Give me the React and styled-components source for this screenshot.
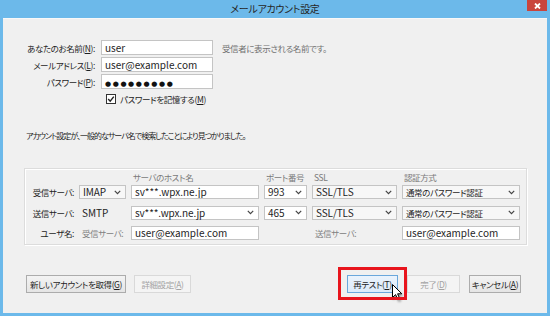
import React from 'react';
import styled, { createGlobalStyle } from 'styled-components';

const GlobalStyle = createGlobalStyle`
  html, body { margin: 0; padding: 0; }
  body {
    width: 550px;
    height: 316px;
    overflow: hidden;
    font-family: "Noto Sans CJK JP", "Noto Sans", sans-serif;
    font-feature-settings: "palt" 1;
    font-size: 8.5px;
    letter-spacing: -0.4px;
    color: #1e1e1e;
  }
`;

const COLUMNS = '46px 47px 128px 43px 85px 118px';

const Window = styled.div`
  width: 550px;
  height: 316px;
  box-sizing: border-box;
  padding: 0 3px 3px;
  background: #6cb9ea;
  display: flex;
  flex-direction: column;
`;

const TitleBar = styled.div`
  height: 18px;
  display: grid;
  grid-template-columns: 1fr auto 1fr;
  align-items: start;
`;

const Title = styled.div`
  grid-column: 2;
  font-size: 10px;
  line-height: 17px;
  color: #262626;
  letter-spacing: -0.3px;
`;

const CloseButton = styled.div`
  justify-self: end;
  width: 20px;
  height: 11px;
  background: #c9453d;
  display: flex;
  align-items: center;
  justify-content: center;
`;

const Content = styled.div`
  flex: 1;
  background: #f0f0f0;
  border-top: 1px solid #f8f8f8;
  padding-top: 21px;
  display: flex;
  flex-direction: column;
`;

const IdentityGrid = styled.div`
  display: grid;
  grid-template-columns: 92px 112px auto;
  grid-auto-rows: 15px;
  column-gap: 6px;
  row-gap: 2px;
  align-items: center;
`;

const Label = styled.div`
  text-align: right;
  white-space: nowrap;
  line-height: 12px;
`;

const Hint = styled.div`
  margin-left: 3px;
  color: #707070;
  white-space: nowrap;
`;

const Jp = styled.span`
  font-size: 8.5px;
  letter-spacing: -0.4px;
`;

const TextBox = styled.div`
  height: ${p => p.$h || 15}px;
  box-sizing: border-box;
  background: #fff;
  border: 1px solid #c4c4c4;
  padding-left: 3px;
  font-size: 10px;
  letter-spacing: 0;
  line-height: ${p => (p.$h || 15) - 2}px;
  white-space: nowrap;
  overflow: hidden;
`;

const Dots = styled.span`
  font-family: "DejaVu Sans", sans-serif;
  font-size: 7px;
  letter-spacing: 1.6px;
  color: #111;
`;

const Select = styled.div`
  height: 14px;
  box-sizing: border-box;
  background: ${p => (p.$flat ? '#fff' : '#f7f7f7')};
  border: 1px solid #c4c4c4;
  padding: 0 4px 0 3px;
  display: flex;
  align-items: center;
  justify-content: space-between;
  font-size: 10px;
  letter-spacing: -0.1px;
  line-height: 12px;
  white-space: nowrap;
`;

const CheckRow = styled.div`
  grid-column: 2 / 4;
  height: 14px;
  margin-left: 5px;
  display: flex;
  align-items: center;
  gap: 4px;
`;

const Message = styled.div`
  margin: 24px 0 0 23px;
  font-size: 8px;
  line-height: 12px;
  letter-spacing: -1px;
`;

const Group = styled.div`
  margin: 26px 20px 0 21px;
  border: 1px solid #dcdcdc;
  box-shadow: inset 1px 1px #fff, 1px 1px #fff;
  padding: 0 0 4px 3px;
`;

const HeaderRow = styled.div`
  margin-top: 2px;
  height: 12px;
  display: grid;
  grid-template-columns: ${COLUMNS};
  column-gap: 5px;
  color: #7a7a7a;
  line-height: 12px;
`;

const HeaderCell = styled.div`
  grid-column: ${p => p.$col};
  padding-left: 2px;
  white-space: nowrap;
`;

const FieldGrid = styled.div`
  margin-top: 2px;
  display: grid;
  grid-template-columns: ${COLUMNS};
  grid-auto-rows: 14px;
  column-gap: 5px;
  row-gap: 6.5px;
  align-items: center;
`;

const PlainValue = styled.div`
  padding-left: 3px;
  font-size: ${p => (p.$latin ? 10 : 8.5)}px;
  letter-spacing: ${p => (p.$latin ? 0 : -0.4)}px;
  color: ${p => (p.$muted ? '#808080' : '#1e1e1e')};
  white-space: nowrap;
`;

const ButtonRow = styled.div`
  margin-top: 30px;
  padding: 0 26px 0 23px;
  display: flex;
  align-items: center;
`;

const ButtonGroup = styled.div`
  display: flex;
  gap: ${p => p.$gap}px;
`;

const Spacer = styled.div`
  flex: 1;
`;

const Button = styled.div`
  width: ${p => p.$w}px;
  height: 18px;
  box-sizing: border-box;
  display: flex;
  align-items: center;
  justify-content: center;
  border: 1px solid ${p => (p.$disabled ? '#d9d9d9' : p.$hover ? '#6aa7dc' : '#acacac')};
  background: ${p => (p.$disabled ? '#f4f4f4' : p.$hover ? 'linear-gradient(#eaf3fc, #dcebfa)' : 'linear-gradient(#f3f3f3, #e5e5e5)')};
  color: ${p => (p.$disabled ? '#a3a3a3' : '#1e1e1e')};
  white-space: nowrap;
`;

const Highlight = styled.div`
  position: relative;
  &::after {
    content: '';
    position: absolute;
    left: -9px;
    right: -9px;
    top: -8px;
    bottom: -7px;
    border: 3px solid #e8141c;
    pointer-events: none;
  }
`;

const Pointer = styled.svg`
  position: absolute;
  left: 45px;
  top: 9px;
  filter: drop-shadow(1px 2px 1px rgba(0, 0, 0, 0.35));
`;

function Chevron() {
  return (
    <svg width="7" height="5" viewBox="0 0 7 5">
      <path d="M0.8 0.8 L3.5 3.6 L6.2 0.8" fill="none" stroke="#444" strokeWidth="1.2" />
    </svg>
  );
}

function Check() {
  return (
    <svg width="10" height="10" viewBox="0 0 10 10">
      <rect x="0.5" y="0.5" width="9" height="9" fill="#fff" stroke="#333" />
      <path d="M2.2 5 L4.2 7.2 L7.8 2.6" fill="none" stroke="#222" strokeWidth="1.4" />
    </svg>
  );
}

export default function App() {
  return (
    <>
      <GlobalStyle />
      <Window>
        <TitleBar>
          <Title>メールアカウント設定</Title>
          <CloseButton>
            <svg width="7" height="6" viewBox="0 0 7 6">
              <path d="M1 0.5 L6 5.5 M6 0.5 L1 5.5" stroke="#fff" strokeWidth="1.8" />
            </svg>
          </CloseButton>
        </TitleBar>

        <Content>
          <IdentityGrid>
            <Label>あなたのお名前(<u>N</u>):</Label>
            <TextBox>user</TextBox>
            <Hint>受信者に表示される名前です。</Hint>

            <Label>メールアドレス(<u>L</u>):</Label>
            <TextBox>user@example.com</TextBox>
            <div />

            <Label>パスワード(<u>P</u>):</Label>
            <TextBox><Dots>●●●●●●●●●</Dots></TextBox>
            <div />

            <div />
            <CheckRow>
              <Check />
              <span>パスワードを記憶する(<u>M</u>)</span>
            </CheckRow>
          </IdentityGrid>

          <Message>アカウント設定が、一般的なサーバ名で検索したことにより見つかりました。</Message>

          <Group>
            <HeaderRow>
              <HeaderCell $col={3}>サーバのホスト名</HeaderCell>
              <HeaderCell $col={4}>ポート番号</HeaderCell>
              <HeaderCell $col={5}>SSL</HeaderCell>
              <HeaderCell $col={6}>認証方式</HeaderCell>
            </HeaderRow>

            <FieldGrid>
              <Label>受信サーバ:</Label>
              <Select>IMAP<Chevron /></Select>
              <TextBox $h={14}>sv***.wpx.ne.jp</TextBox>
              <Select $flat>993<Chevron /></Select>
              <Select>SSL/TLS<Chevron /></Select>
              <Select><Jp>通常のパスワード認証</Jp><Chevron /></Select>

              <Label>送信サーバ:</Label>
              <PlainValue $latin>SMTP</PlainValue>
              <Select $flat>sv***.wpx.ne.jp<Chevron /></Select>
              <Select $flat>465<Chevron /></Select>
              <Select>SSL/TLS<Chevron /></Select>
              <Select><Jp>通常のパスワード認証</Jp><Chevron /></Select>

              <Label>ユーザ名:</Label>
              <PlainValue $muted>受信サーバ:</PlainValue>
              <TextBox $h={14}>user@example.com</TextBox>
              <div />
              <PlainValue $muted>送信サーバ:</PlainValue>
              <TextBox $h={14}>user@example.com</TextBox>
            </FieldGrid>
          </Group>

          <ButtonRow>
            <ButtonGroup $gap={8}>
              <Button $w={100}>新しいアカウントを取得(<u>G</u>)</Button>
              <Button $w={57} $disabled>詳細設定(<u>A</u>)</Button>
            </ButtonGroup>
            <Spacer />
            <ButtonGroup $gap={9}>
              <Highlight>
                <Button $w={51} $hover>再テスト(<u>T</u>)</Button>
                <Pointer width="12" height="18" viewBox="0 0 12 18">
                  <path d="M0.5 0.5 L0.5 13.5 L3.6 10.6 L5.8 15.6 L7.8 14.8 L5.6 9.8 L9.8 9.8 Z" fill="#fff" stroke="#000" strokeWidth="1" strokeLinejoin="round" />
                </Pointer>
              </Highlight>
              <Button $w={53} $disabled>完了(<u>D</u>)</Button>
              <Button $w={52}>キャンセル(<u>A</u>)</Button>
            </ButtonGroup>
          </ButtonRow>
        </Content>
      </Window>
    </>
  );
}
